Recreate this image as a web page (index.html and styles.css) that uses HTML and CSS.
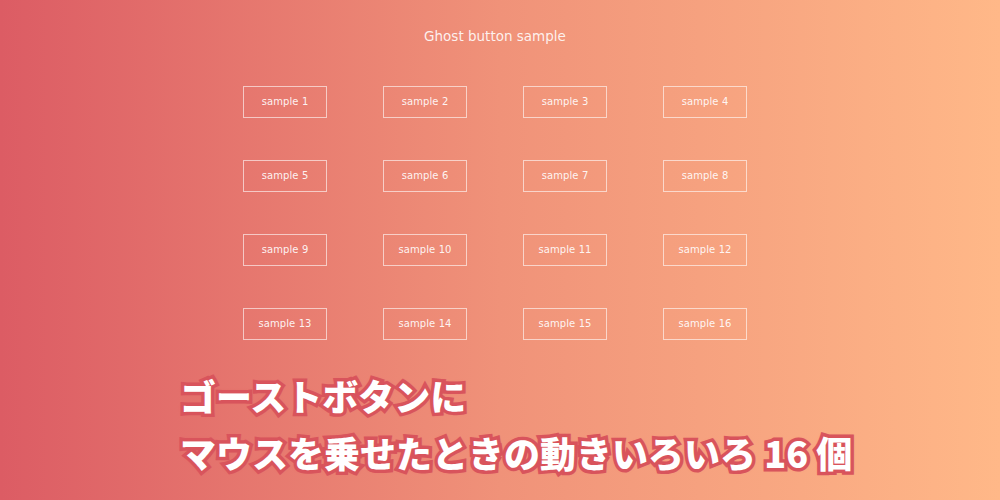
FILE: index.html
```html
<!DOCTYPE html>
<html lang="ja">
<head>
<meta charset="utf-8">
<title>Ghost button sample</title>
<link rel="stylesheet" href="styles.css">
</head>
<body>
<div class="page">
  <h1 class="title">Ghost button sample</h1>
  <div class="grid">
    <a class="ghost">sample 1</a>
    <a class="ghost">sample 2</a>
    <a class="ghost">sample 3</a>
    <a class="ghost">sample 4</a>
    <a class="ghost">sample 5</a>
    <a class="ghost">sample 6</a>
    <a class="ghost">sample 7</a>
    <a class="ghost">sample 8</a>
    <a class="ghost">sample 9</a>
    <a class="ghost">sample 10</a>
    <a class="ghost">sample 11</a>
    <a class="ghost">sample 12</a>
    <a class="ghost">sample 13</a>
    <a class="ghost">sample 14</a>
    <a class="ghost">sample 15</a>
    <a class="ghost">sample 16</a>
  </div>
  <div class="caption">
    <p class="line">ゴーストボタンに</p>
    <p class="line">マウスを乗せたときの動きいろいろ 16 個</p>
  </div>
</div>
</body>
</html>
```
FILE: styles.css
```css
html, body {
  margin: 0;
  padding: 0;
}
body {
  width: 1000px;
  height: 500px;
  overflow: hidden;
  background: linear-gradient(to right, #dc5c64 0%, #f09279 50%, #ffb888 100%);
  font-family: "DejaVu Sans", Verdana, sans-serif;
}
.page {
  width: 1000px;
  height: 500px;
  display: flex;
  flex-direction: column;
}
.title {
  margin: 27px 0 0 -10px;
  text-align: center;
  font-family: "DejaVu Sans", sans-serif;
  font-weight: normal;
  font-size: 13.5px;
  line-height: 18px;
  color: rgba(255, 255, 255, 0.88);
}
.grid {
  margin: 41px 0 0 243px;
  display: grid;
  grid-template-columns: repeat(4, 84px);
  column-gap: 56px;
  row-gap: 42px;
}
.ghost {
  box-sizing: border-box;
  height: 32px;
  display: flex;
  align-items: center;
  justify-content: center;
  padding-bottom: 1px;
  border: 1px solid rgba(255, 255, 255, 0.6);
  color: rgba(255, 255, 255, 0.92);
  font-size: 10px;
  letter-spacing: 0.1px;
}
.caption {
  margin: 27px 0 0 180px;
}
.line {
  margin: 0;
  font-family: "Noto Sans CJK JP", sans-serif;
  font-weight: 900;
  font-size: 36px;
  line-height: 57px;
  color: #ffffff;
  -webkit-text-stroke: 7px #d9555d;
  paint-order: stroke fill;
  text-shadow: 0 0 4px rgba(217, 80, 90, 0.6);
  white-space: nowrap;
}
```
